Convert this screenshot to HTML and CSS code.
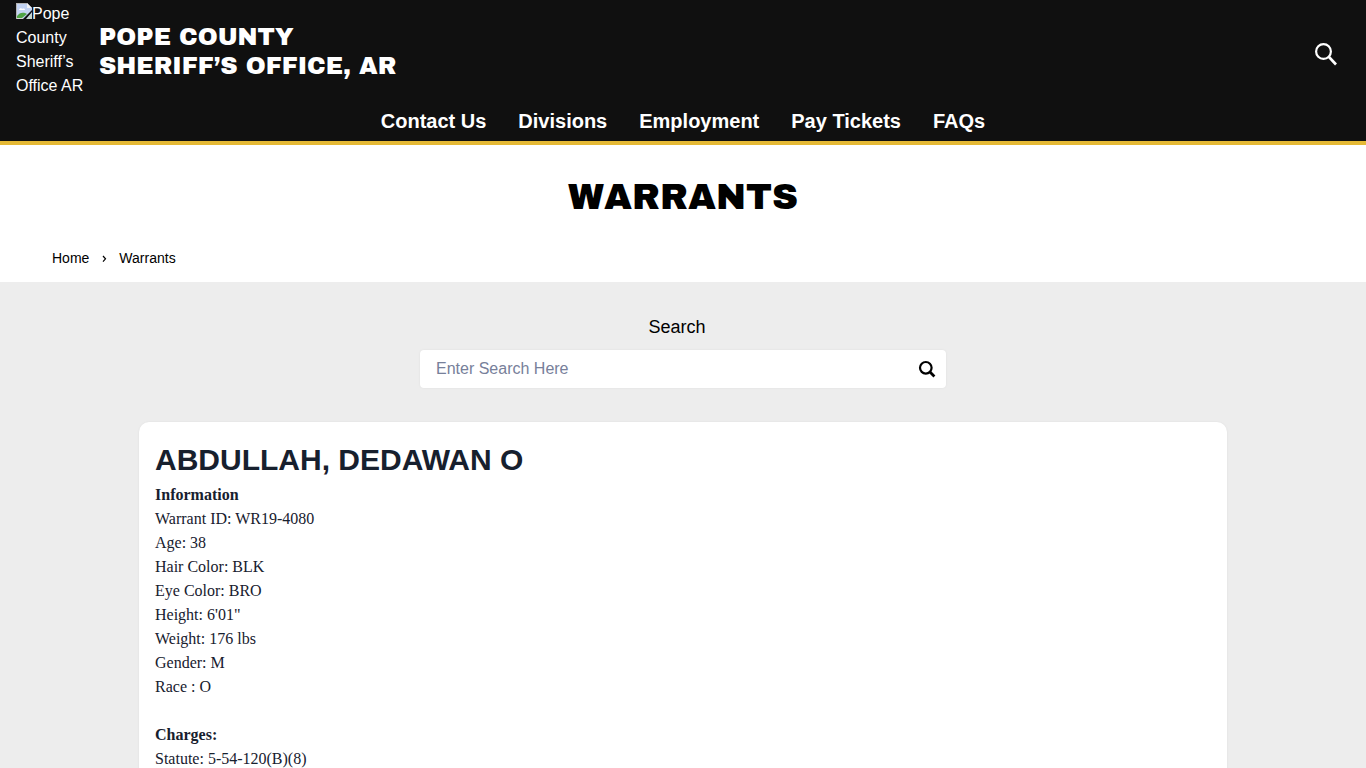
FILE: index.html
```html
<!DOCTYPE html>
<html lang="en">
<head>
  <meta charset="UTF-8">
  <meta name="viewport" content="width=device-width, initial-scale=1">
  <title>Warrants - Pope County Sheriff’s Office, AR</title>
  <link rel="stylesheet" href="styles.css">
</head>
<body>
  <header class="header">
    <div class="header-top">
      <a class="brand" href="#">
        <span class="logo"><svg class="logo-icon" viewBox="0 0 16 16" aria-hidden="true">
          <path d="M0 0h11l5 5v11H0z" fill="#c3d3f2"/>
          <path d="M0 0h11v1H1v15H0z" fill="#b4b4b4"/>
          <path d="M11 0l5 5h-5z" fill="#f4f4f4"/>
          <path d="M3 7c0-2 3-2 3-1 2-1 3 0 3 1z" fill="#fff"/>
          <path d="M1 15v-2c2-3 5-4 8-3l2 1-5 4z" fill="#4fa346"/>
          <path d="M1 15h6v1H1z" fill="#d8d8d8"/>
          <path d="M7 16l9-9v2l-6 7z" fill="#101010"/>
          <path d="M11 16l5-6v6z" fill="#c9d6c8"/>
        </svg>Pope County Sheriff’s Office AR</span>
        <span class="brand-name">Pope County<br>Sheriff’s Office, AR</span>
      </a>
      <button class="icon-button" type="button" aria-label="Open search">
        <svg width="24" height="24" viewBox="0 0 24 24" fill="none" stroke="currentColor" stroke-width="2.2">
          <circle cx="9.5" cy="9.5" r="7.4"/>
          <path d="M15 15l7 7.5" stroke-width="2.6"/>
        </svg>
      </button>
    </div>
    <nav class="nav">
      <a href="#">Contact Us</a>
      <a href="#">Divisions</a>
      <a href="#">Employment</a>
      <a href="#">Pay Tickets</a>
      <a href="#">FAQs</a>
    </nav>
  </header>

  <section class="page-title">
    <h1>Warrants</h1>
    <nav class="breadcrumb" aria-label="Breadcrumb">
      <a href="#">Home</a>
      <svg width="6" height="8" viewBox="0 0 6 8" fill="none" stroke="currentColor" stroke-width="1.2" aria-hidden="true">
        <path d="M2 2l2.5 2.8L2 7.6"/>
      </svg>
      <span>Warrants</span>
    </nav>
  </section>

  <main class="content">
    <form class="search" onsubmit="event.preventDefault();">
      <label for="search">Search</label>
      <div class="search-box">
        <input type="text" id="search" placeholder="Enter Search Here">
        <button class="icon-button" type="submit" aria-label="Search">
          <svg width="18" height="18" viewBox="0 0 18 18" fill="none" stroke="currentColor" stroke-width="2.2">
            <circle cx="7.8" cy="7.8" r="5.8"/>
            <path d="M12 12l4.4 4.4" stroke-width="2.8"/>
          </svg>
        </button>
      </div>
    </form>

    <article class="card">
      <h2>ABDULLAH, DEDAWAN O</h2>
      <p>
        <strong>Information</strong><br>
        Warrant ID: WR19-4080<br>
        Age: 38<br>
        Hair Color: BLK<br>
        Eye Color: BRO<br>
        Height: 6'01"<br>
        Weight: 176 lbs<br>
        Gender: M<br>
        Race : O
      </p>
      <p>
        <strong>Charges:</strong><br>
        Statute: 5-54-120(B)(8)
      </p>
    </article>
  </main>
</body>
</html>
```

FILE: styles.css
```css
* { box-sizing: border-box; }
body { margin: 0; background: #ededed; color: #000; font: 16px/24px "Liberation Sans", Arial, sans-serif; }
a { color: inherit; text-decoration: none; }

.header { background: #101010; color: #fff; border-bottom: 4px solid #e5b935; }
.header-top { display: flex; justify-content: space-between; align-items: center; padding: 0 28px 0 16px; }
.brand { display: flex; align-items: center; gap: 15px; }
.logo { width: 68px; padding: 2px 0 9px; }
.logo-icon { width: 16px; height: 16px; vertical-align: baseline; }
.brand-name { padding-bottom: 4px; font: 400 24px/29px "Archivo Black", Inter, sans-serif; text-transform: uppercase; }
.icon-button { display: flex; padding: 0; border: none; background: none; color: inherit; cursor: pointer; }

.nav { display: flex; justify-content: center; gap: 32px; padding-bottom: 6px; font-size: 20px; line-height: 28px; font-weight: bold; }

.page-title { background: #fff; padding: 28px 52px 12px; }
.page-title h1 { margin: 0 0 25px; text-align: center; text-transform: uppercase; font: 400 36px/48px "Archivo Black", Inter, sans-serif; }
.breadcrumb { display: flex; align-items: center; gap: 12px; font-size: 14px; }

.content { padding: 33px 16px; }
.search { max-width: 526px; margin: 0 auto 34px; }
.search label { display: block; padding-right: 12px; margin-bottom: 11px; text-align: center; font-size: 18px; }
.search-box { display: flex; align-items: center; height: 38px; padding: 0 10px 0 16px; background: #fff; border-radius: 4px; box-shadow: 0 0 2px #ddd; }
.search-box input { flex: 1; min-width: 0; padding: 0; border: none; outline: none; background: none; font: inherit; }
.search-box input::placeholder { color: #77809a; opacity: 1; }

.card { max-width: 1088px; margin: 0 auto; padding: 18px 16px; background: #fff; border-radius: 10px; box-shadow: 0 0 2px #ddd; color: #17202e; }
.card h2 { margin: 0 0 3px; font-size: 30px; line-height: 40px; }
.card p { margin: 0 0 24px; font-family: "Liberation Serif", "Times New Roman", serif; }
```
